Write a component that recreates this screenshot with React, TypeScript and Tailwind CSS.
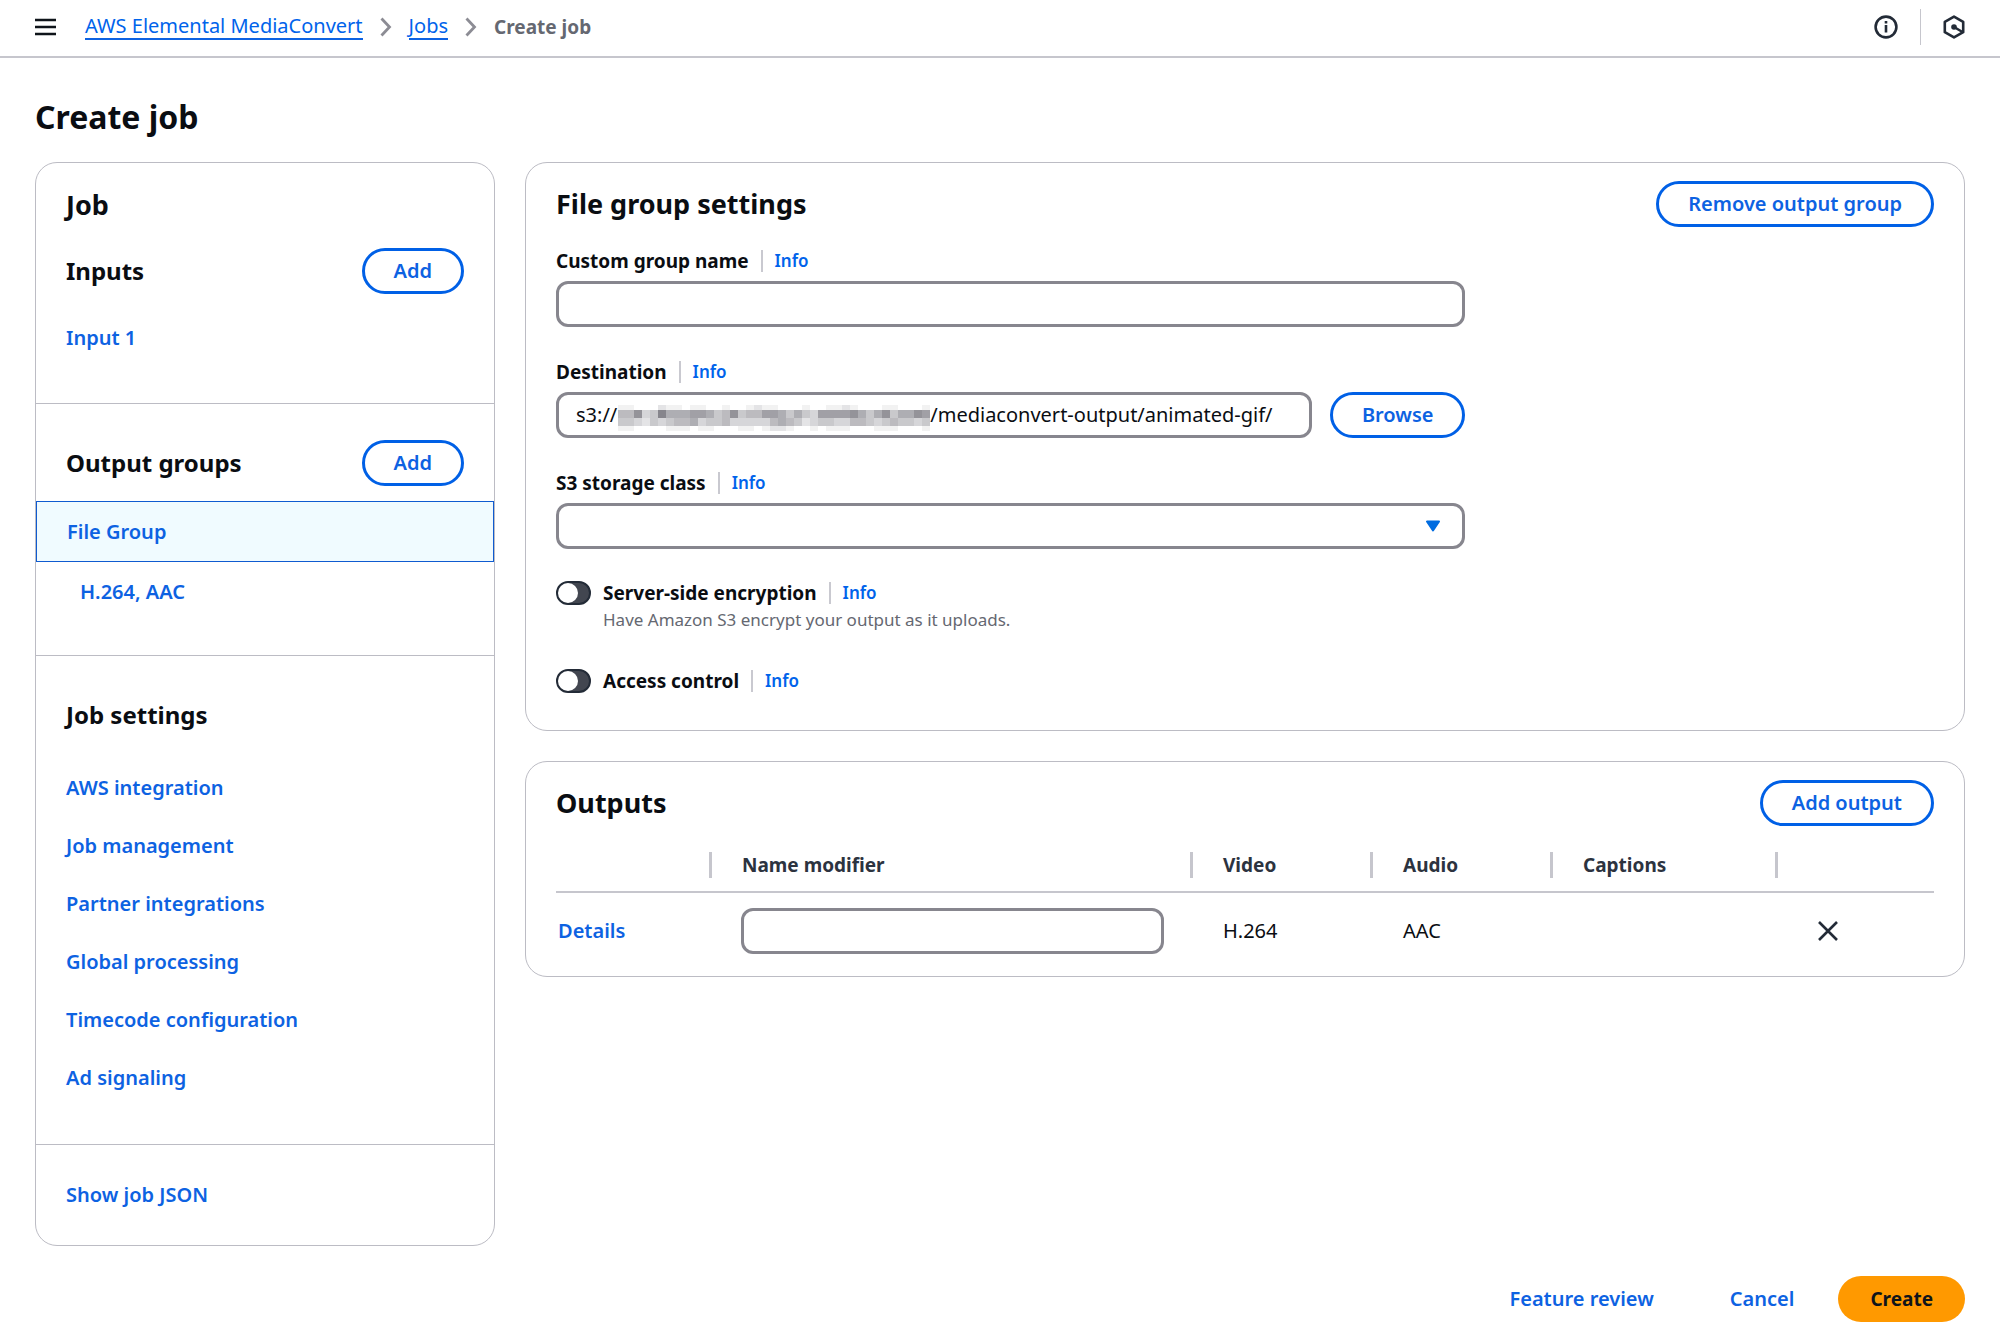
import React, { useState } from "react";

const SETTINGS_LINKS = [
  "AWS integration",
  "Job management",
  "Partner integrations",
  "Global processing",
  "Timecode configuration",
  "Ad signaling",
];

// grey levels of the redacted bucket name, one string per block row (0 = white, 9 = darkest)
const REDACTED_ROWS = [
  "110002110110010012110001001121000110001",
  "558349666776458455776464377778646846687",
  "443243455634453333356542344335543454434",
  "110000111011000110122100101110001110001",
];

const linkClass = "text-[20px] leading-7 font-semibold text-[#0d62e2]";
const labelClass = "text-[19px] leading-6 font-bold text-[#0a0d12]";
const fieldClass = "h-[46px] rounded-xl border-3 border-[#87868e] bg-white px-[17px] text-[20px] text-[#0a0d12] outline-none";
const cardClass = "rounded-[22px] border border-[#bcbcc4]";

function OutlineButton({ children }: { children: React.ReactNode }) {
  return (
    <button
      type="button"
      className="h-[46px] shrink-0 rounded-full border-3 border-[#0060e6] bg-white px-[29px] text-[20px] leading-7 font-semibold text-[#0d62e2]"
    >
      {children}
    </button>
  );
}

function Info() {
  return (
    <a href="#" className="ml-3 border-l-2 border-[#c9c9d0] pl-3 text-[17px] leading-[22px] font-semibold text-[#0063eb]">
      Info
    </a>
  );
}

function FieldLabel({ htmlFor, children }: { htmlFor: string; children: React.ReactNode }) {
  return (
    <div className="mb-2 flex h-6 items-center">
      <label htmlFor={htmlFor} className={labelClass}>
        {children}
      </label>
      <Info />
    </div>
  );
}

function Toggle({ id, label, hint }: { id: string; label: string; hint?: string }) {
  const [on, setOn] = useState(false);
  return (
    <div className="flex items-start gap-3">
      <input
        id={id}
        type="checkbox"
        role="switch"
        checked={on}
        onChange={() => setOn(!on)}
        className="h-6 w-[35px] shrink-0 appearance-none rounded-full border-2 border-[#232b37] bg-[#424650] before:block before:size-5 before:rounded-full before:bg-white checked:before:ml-auto"
      />
      <div>
        <div className="flex h-6 items-center">
          <label htmlFor={id} className={labelClass}>
            {label}
          </label>
          <Info />
        </div>
        {hint && <p className="mt-[3px] text-[17px] leading-6 text-[#656871]">{hint}</p>}
      </div>
    </div>
  );
}

function Redacted() {
  return (
    <svg width="312" height="26" viewBox="0 3 312 26" className="mt-[6px] ml-px shrink-0" aria-hidden="true" shapeRendering="crispEdges">
      {REDACTED_ROWS.map((row, y) =>
        [...row].map((level, x) => (
          <rect key={`${x}-${y}`} x={x * 8} y={y * 8} width="8" height="8" fill="#6b6a73" fillOpacity={Number(level) / 11} />
        )),
      )}
    </svg>
  );
}

function Chevron() {
  return (
    <svg width="12" height="20" viewBox="0 0 12 20" fill="none" stroke="#8c8c94" strokeWidth="2.8">
      <path d="M1.5 1.5L9.5 10l-8 8.5" />
    </svg>
  );
}

function TopBar() {
  return (
    <header className="flex h-[58px] items-center border-b-2 border-[#c6c6cd] px-[35px] pb-[3px] text-[20px]">
      <button type="button" aria-label="Open navigation">
        <svg width="21" height="20" viewBox="0 0 21 20" stroke="#0f141a" strokeWidth="2.4">
          <path d="M0 3h21M0 10h21M0 17h21" />
        </svg>
      </button>
      <nav className="ml-[29px] flex items-center gap-[17px]">
        <a href="#" className="border-b-2 border-[#0d62e2] leading-6 text-[#0063eb]">
          AWS Elemental MediaConvert
        </a>
        <Chevron />
        <a href="#" className="border-b-2 border-[#0d62e2] leading-6 text-[#0063eb]">
          Jobs
        </a>
        <Chevron />
        <span className="text-[19px] leading-6 font-bold text-[#656871]">Create job</span>
      </nav>
      <div className="ml-auto flex items-center">
        <button type="button" aria-label="Info panel">
          <svg width="24" height="24" viewBox="0 0 24 24" fill="none" stroke="#232b37" strokeWidth="2.6">
            <circle cx="12" cy="12" r="10.4" />
            <path d="M12 10v7.600M12 6v2.600" />
          </svg>
        </button>
        <span className="mx-[22px] h-9 w-px bg-[#c6c6cd]" />
        <button type="button" aria-label="Resources">
          <svg width="22" height="24" viewBox="0 0 22 24" fill="none" stroke="#232b37" strokeWidth="2.6" strokeLinejoin="round">
            <path d="M11 1.600l9.200 5.200v10.400L11 22.400 1.800 17.200V6.800z" />
            <circle cx="11" cy="12" r="2.800" fill="#232b37" stroke="none" />
            <path d="M11 12l8.500 5" />
          </svg>
        </button>
      </div>
    </header>
  );
}

function Sidebar() {
  return (
    <aside className={`${cardClass} w-[460px] shrink-0`}>
      <section className="h-[241px] border-b border-[#bcbcc4] px-[30px] pt-6">
        <h2 className="text-[27px] leading-9 font-bold">Job</h2>
        <div className="mt-[25px] flex items-center justify-between">
          <h3 className="text-2xl font-bold">Inputs</h3>
          <OutlineButton>Add</OutlineButton>
        </div>
        <div className="mt-[30px]">
          <a href="#" className={linkClass}>Input 1</a>
        </div>
      </section>
      <section className="h-[252px] border-b border-[#bcbcc4] pt-9">
        <div className="flex items-center justify-between px-[30px]">
          <h3 className="text-2xl font-bold">Output groups</h3>
          <OutlineButton>Add</OutlineButton>
        </div>
        <div className="mt-[15px] flex h-[61px] items-center border border-[#0f5bd0] bg-[#f0fbff] px-[30px]">
          <a href="#" className={linkClass}>File Group</a>
        </div>
        <div className="mt-4 pl-11">
          <a href="#" className={linkClass}>H.264, AAC</a>
        </div>
      </section>
      <section className="h-[489px] border-b border-[#bcbcc4] px-[30px] pt-[41px]">
        <h3 className="text-2xl leading-9 font-bold">Job settings</h3>
        <ul className="mt-[41px] flex flex-col gap-[30px]">
          {SETTINGS_LINKS.map((link) => (
            <li key={link} className="h-7">
              <a href="#" className={linkClass}>{link}</a>
            </li>
          ))}
        </ul>
      </section>
      <div className="flex h-[100px] items-center px-[30px]">
        <a href="#" className={linkClass}>Show job JSON</a>
      </div>
    </aside>
  );
}

function FileGroupSettings() {
  return (
    <section className={`${cardClass} px-[30px] pt-[18px] pb-[37px]`}>
      <div className="flex items-center justify-between">
        <h2 className="text-[27px] leading-9 font-bold">File group settings</h2>
        <OutlineButton>Remove output group</OutlineButton>
      </div>
      <div className="mt-[22px] w-[66%]">
        <FieldLabel htmlFor="group-name">Custom group name</FieldLabel>
        <input id="group-name" type="text" className={`${fieldClass} block w-full`} />
      </div>
      <div className="mt-[33px] w-[66%]">
        <FieldLabel htmlFor="destination">Destination</FieldLabel>
        <div className="flex gap-[18px]">
          <div className={`${fieldClass} flex min-w-0 flex-1 items-center`}>
            <span>s3://</span>
            <Redacted />
            <input
              id="destination"
              type="text"
              defaultValue="/mediaconvert-output/animated-gif/"
              className="min-w-0 flex-1 outline-none"
            />
          </div>
          <OutlineButton>Browse</OutlineButton>
        </div>
      </div>
      <div className="mt-[33px] w-[66%]">
        <FieldLabel htmlFor="storage-class">S3 storage class</FieldLabel>
        <div className="relative">
          <select id="storage-class" defaultValue="" className={`${fieldClass} block w-full appearance-none`}>
            <option value="" />
          </select>
          <svg width="16" height="12" viewBox="0 0 16 12" className="pointer-events-none absolute top-[17px] right-6" fill="#006ce0" stroke="#006ce0" strokeWidth="2" strokeLinejoin="round">
            <path d="M2 1.500h12L8 10.500z" />
          </svg>
        </div>
      </div>
      <div className="mt-8 flex flex-col gap-[37px]">
        <Toggle id="sse" label="Server-side encryption" hint="Have Amazon S3 encrypt your output as it uploads." />
        <Toggle id="acl" label="Access control" />
      </div>
    </section>
  );
}

function HeaderCell({ children, last }: { children?: React.ReactNode; last?: boolean }) {
  return (
    <th scope="col" className="pb-[13px] text-left">
      <div className={last ? "h-[26px]" : "flex h-[26px] items-center border-r-3 border-[#c6c6cd] pl-[30px] text-[19px] font-bold text-[#2c333f]"}>
        {children}
      </div>
    </th>
  );
}

function Outputs() {
  return (
    <section className={`${cardClass} px-[30px] pt-[18px] pb-[22px]`}>
      <div className="flex items-center justify-between">
        <h2 className="text-[27px] leading-9 font-bold">Outputs</h2>
        <OutlineButton>Add output</OutlineButton>
      </div>
      <table className="mt-[26px] w-full table-fixed">
        <colgroup>
          <col className="w-[156px]" />
          <col className="w-[481px]" />
          <col className="w-[180px]" />
          <col className="w-[180px]" />
          <col className="w-[225px]" />
          <col />
        </colgroup>
        <thead>
          <tr className="border-b-2 border-[#c6c6cd]">
            <HeaderCell />
            <HeaderCell>Name modifier</HeaderCell>
            <HeaderCell>Video</HeaderCell>
            <HeaderCell>Audio</HeaderCell>
            <HeaderCell>Captions</HeaderCell>
            <HeaderCell last />
          </tr>
        </thead>
        <tbody>
          <tr className="text-[20px]">
            <td className="pt-[15px] pl-[2px]">
              <a href="#" className={linkClass}>Details</a>
            </td>
            <td className="px-[29px] pt-[15px]">
              <input type="text" aria-label="Name modifier" className={`${fieldClass} block w-full`} />
            </td>
            <td className="pt-[15px] pl-[30px]">H.264</td>
            <td className="pt-[15px] pl-[30px]">AAC</td>
            <td />
            <td className="pt-[15px] pl-10">
              <button type="button" aria-label="Remove output" className="block">
                <svg width="20" height="20" viewBox="0 0 20 20" stroke="#232b37" strokeWidth="2.6">
                  <path d="M1 1l18 18M19 1L1 19" />
                </svg>
              </button>
            </td>
          </tr>
        </tbody>
      </table>
    </section>
  );
}

export default function App() {
  return (
    <div className="min-h-screen bg-white font-['Noto_Sans',sans-serif] text-[#0a0d12]">
      <TopBar />
      <main className="px-[35px] pt-[37px]">
        <h1 className="text-[32px] leading-[44px] font-bold">Create job</h1>
        <div className="mt-[23px] flex items-start gap-[30px]">
          <Sidebar />
          <div className="flex min-w-0 flex-1 flex-col gap-[30px]">
            <FileGroupSettings />
            <Outputs />
          </div>
        </div>
        <footer className="mt-[30px] flex h-[46px] items-center justify-end">
          <button type="button" className={linkClass}>Feature review</button>
          <button type="button" className={`${linkClass} mr-11 ml-[76px]`}>Cancel</button>
          <button type="button" className="h-[46px] rounded-full bg-[#ff9900] px-8 text-[19px] font-bold text-[#0f141a]">
            Create
          </button>
        </footer>
      </main>
    </div>
  );
}
